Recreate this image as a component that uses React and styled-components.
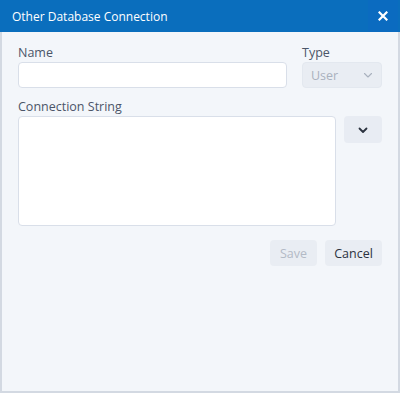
import React from 'react'
import styled, { createGlobalStyle } from 'styled-components'

const GlobalStyle = createGlobalStyle`
    html, body {
        margin: 0;
        padding: 0;
        background: #ffffff;
    }
    * {
        box-sizing: border-box;
    }
`;

const Window = styled.div`
    width: 400px;
    height: 393px;
    display: flex;
    flex-direction: column;
    background: #f3f6fa;
    border: 2px solid #d3d9e2;
    border-top: none;
    font-family: "Open Sans", "Noto Sans", sans-serif;
`;

const Header = styled.div`
    height: 32px;
    margin: 0 -2px;
    flex-shrink: 0;
    display: flex;
    align-items: center;
    justify-content: space-between;
    background: #0a6ebd;
    color: #ffffff;
    padding-left: 12px;
    font-size: 12px;
`;

const CloseButton = styled.div`
    width: 30px;
    height: 32px;
    display: flex;
    align-items: center;
    justify-content: center;
    background: #0b6bc0;
    margin-right: 2px;
`;

const Body = styled.div`
    padding: 13px 16px 0 16px;
    display: flex;
    flex-direction: column;
`;

const Row = styled.div`
    display: grid;
    grid-template-columns: ${p => p.$cols};
    column-gap: ${p => p.$gap}px;
    align-items: end;
    margin-bottom: ${p => p.$mb || 0}px;
`;

const Field = styled.div`
    display: flex;
    flex-direction: column;
`;

const Label = styled.label`
    font-size: 12.5px;
    line-height: 16px;
    color: #4b5568;
    margin-bottom: 1px;
`;

const Input = styled.div`
    height: 26px;
    background: #ffffff;
    border: 1px solid #d9dfe9;
    border-radius: 4px;
`;

const TextArea = styled.div`
    height: 110px;
    background: #ffffff;
    border: 1px solid #d9dfe9;
    border-radius: 4px;
`;

const Select = styled.div`
    height: 26px;
    background: #e9edf3;
    border: 1px solid #e3e8ef;
    border-radius: 4px;
    display: flex;
    align-items: center;
    justify-content: space-between;
    padding: 0 7px 0 8px;
    color: #a9b1be;
    font-size: 12.5px;
`;

const SideCol = styled.div`
    align-self: start;
`;

const IconButton = styled.div`
    width: 38px;
    height: 27px;
    background: #e8ecf3;
    border-radius: 4px;
    display: flex;
    align-items: center;
    justify-content: center;
`;

const Actions = styled.div`
    display: flex;
    justify-content: flex-end;
    gap: 8px;
    margin-top: 14px;
`;

const Button = styled.div`
    height: 26px;
    width: ${p => p.$w}px;
    background: #e9edf3;
    border-radius: 4px;
    display: flex;
    align-items: center;
    justify-content: center;
    font-size: 12.5px;
    color: ${p => (p.$disabled ? '#b3bac6' : '#2c3340')};
`;

const Chevron = ({ color, width, size }) => (
    <svg width={size} height={size} viewBox="0 0 12 12">
        <path d="M2.5 4.5 L6 8 L9.5 4.5" fill="none" stroke={color} strokeWidth={width} strokeLinecap="round" strokeLinejoin="round" />
    </svg>
);

export default function App() {
    return (
        <>
            <GlobalStyle />
            <Window>
                <Header>
                    <span>Other Database Connection</span>
                    <CloseButton>
                        <svg width="10" height="10" viewBox="0 0 10 10">
                            <path d="M1.5 1.5 L8.5 8.5 M8.5 1.5 L1.5 8.5" stroke="#ffffff" strokeWidth="2.2" strokeLinecap="square" />
                        </svg>
                    </CloseButton>
                </Header>
                <Body>
                    <Row $cols="1fr 80px" $gap={15} $mb={11}>
                        <Field>
                            <Label>Name</Label>
                            <Input />
                        </Field>
                        <Field>
                            <Label>Type</Label>
                            <Select>
                                <span>User</span>
                                <Chevron color="#a9b1be" width={1.1} size={12} />
                            </Select>
                        </Field>
                    </Row>
                    <Label>Connection String</Label>
                    <Row $cols="1fr 38px" $gap={8}>
                        <TextArea />
                        <SideCol>
                            <IconButton>
                                <Chevron color="#2c3340" width={1.8} size={12} />
                            </IconButton>
                        </SideCol>
                    </Row>
                    <Actions>
                        <Button $disabled $w={47}>Save</Button>
                        <Button $w={57}>Cancel</Button>
                    </Actions>
                </Body>
            </Window>
        </>
    );
}
